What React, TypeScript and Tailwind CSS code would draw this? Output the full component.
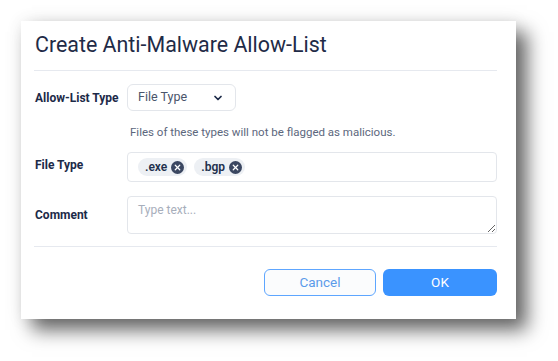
import { ChevronDown, X } from "lucide-react";

const font = { fontFamily: "Roboto, 'Liberation Sans', sans-serif" };

function Chip({ label }: { label: string }) {
  return (
    <span className="inline-flex h-[18px] items-center gap-[4px] rounded-full bg-[#edf0f4] pl-[7px] pr-[3px] text-[12px] font-semibold text-[#22304d]">
      {label}
      <span className="flex h-[13px] w-[13px] items-center justify-center rounded-full bg-[#3b4761]">
        <X size={9} strokeWidth={3.2} className="text-white" />
      </span>
    </span>
  );
}

export default function App() {
  return (
    <div className="h-[361px] w-[558px] overflow-hidden bg-white pl-[21px] pt-[21px]" style={font}>
      <div className="w-[495px] bg-white pl-[13px] pr-[19px] pt-[10px] pb-[23px] shadow-[11px_11px_18px_rgba(0,0,0,0.6),0_0_16px_rgba(0,0,0,0.08)]">
        {/* Header */}
        <h1 className="pl-[1px] text-[21.4px] leading-[28px] text-[#1f2b47]">Create Anti-Malware Allow-List</h1>
        <div className="mt-[11px] h-px bg-[#e6e9ef]" />

        {/* Allow-list type */}
        <div className="mt-[13px] flex items-center">
          <label className="w-[93px] pl-[1px] text-[12px] font-bold text-[#1c2a48]">Allow-List Type</label>
          <button className="flex h-[27px] w-[109px] items-center justify-between rounded-[6px] border border-[#e3e6eb] bg-white pl-[10px] pr-[11px] text-[12.5px] text-[#4a556b]">
            File Type
            <ChevronDown size={12} strokeWidth={3.5} className="text-[#1c2a48]" />
          </button>
        </div>
        <p className="mt-[13px] pl-[96px] text-[11.5px] leading-[16px] text-[#5c677d]">
          Files of these types will not be flagged as malicious.
        </p>

        {/* File type tags */}
        <div className="mt-[12px] flex items-start">
          <label className="mt-[5px] w-[93px] pl-[1px] text-[12px] font-bold leading-[16px] text-[#1c2a48]">File Type</label>
          <div className="flex h-[30px] flex-1 items-center gap-[7px] rounded-[4px] border border-[#e3e6eb] px-[10px]">
            <Chip label=".exe" />
            <Chip label=".bgp" />
          </div>
        </div>

        {/* Comment */}
        <div className="mt-[14px] flex items-center">
          <label className="w-[93px] pl-[1px] text-[12px] font-bold text-[#1c2a48]">Comment</label>
          <textarea
            placeholder="Type text..."
            className="h-[38px] flex-1 rounded-[4px] border border-[#e3e6eb] px-[10px] py-[4px] text-[12px] text-[#1c2a48] outline-none placeholder:text-[#a7aebb]"
          />
        </div>

        <div className="mt-[12px] h-px bg-[#e6e9ef]" />

        {/* Actions */}
        <div className="mt-[22px] flex justify-end gap-[7px]">
          <button className="h-[27px] w-[112px] rounded-[6px] border-[1.5px] border-[#5ea6ff] bg-[#fbfcfd] text-[13.5px] text-[#5b9bea]">
            Cancel
          </button>
          <button className="h-[27px] w-[114px] rounded-[6px] bg-[#3a93ff] text-[13.5px] text-white">OK</button>
        </div>
      </div>
    </div>
  );
}
